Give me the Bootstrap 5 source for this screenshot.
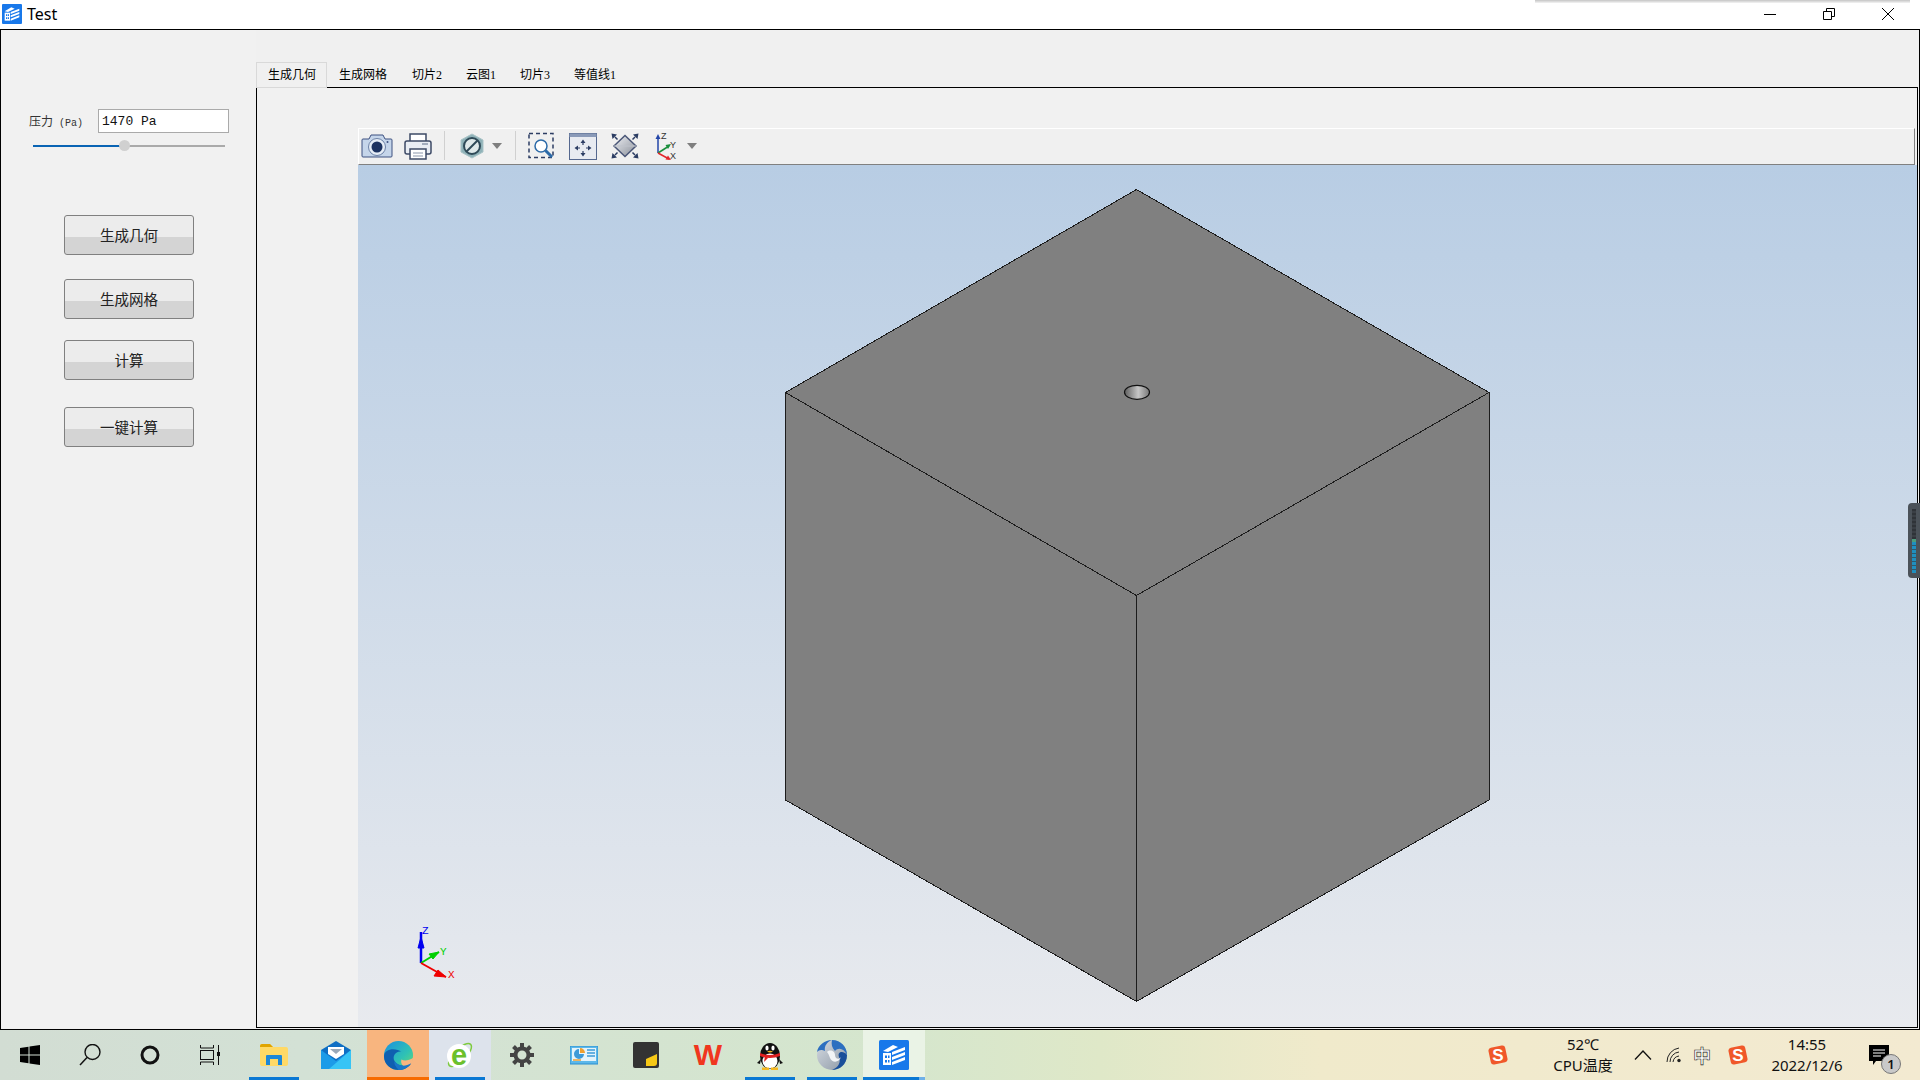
<!DOCTYPE html>
<html lang="zh-CN">
<head>
  <meta charset="UTF-8">
  <title>Test</title>
  <link href="https://cdn.jsdelivr.net/npm/bootstrap@5.3.0/dist/css/bootstrap.min.css" rel="stylesheet">
  <style>
    html, body { height: 100%; }
    body {
      background-color: #f0f0f0;
      overflow: hidden;
      font-family: "Noto Sans", "Noto Sans CJK SC", sans-serif;
      color: #000;
    }
    .app-shell { height: 1080px; position: relative; }

    /* title bar */
    .title-bar { height: 29px; background-color: #fff; padding: 0 0 2px 2px; }
    .title-text { font-size: 16px; margin-left: 5px; line-height: 1; }
    .win-ctl { width: 59px; height: 27px; }
    .win-ctls { padding-right: 3px; }
    .top-shadow {
      position: absolute; left: 1535px; top: 0; width: 375px; height: 3px;
      background: linear-gradient(#c4c4c4, #f4f4f4);
    }

    /* main window */
    .main-win {
      height: 1001px;
      border: 1px solid #000;
      background-color: #f0f0f0;
      padding-right: 1px;
      padding-bottom: 1px;
    }
    .side-panel {
      width: 255px;
      flex: 0 0 255px;
      padding-top: 79px;
      background-color: #f1f1f1;
      font-family: "Noto Sans CJK SC", sans-serif;
    }
    .press-row { padding-left: 28px; height: 24px; }
    .press-label { width: 69px; font-size: 12px; color: #333; white-space: nowrap; }
    .press-unit { font-family: "Liberation Mono", monospace; font-size: 10px; margin-left: 6px; }
    .press-input {
      width: 131px; height: 24px;
      border: 1px solid #aaa;
      border-radius: 0;
      padding: 1px 3px 0;
      font-family: "Liberation Mono", monospace;
      font-size: 13px;
      color: #111;
      background-color: #fff;
    }
    .press-range {
      display: block;
      width: 192px; height: 11px;
      margin: 7px 0 0 32px;
      padding: 0;
    }
    .press-range::-webkit-slider-runnable-track {
      height: 2px; background: transparent;
    }
    .press-range::-webkit-slider-thumb {
      width: 11px; height: 11px; margin-top: -4.5px;
      background-color: #d0d0d0;
      border: 0; border-radius: 50%;
      box-shadow: none;
    }
    .act-btns { padding: 64px 0 0 63px; }
    .act-btn {
      display: block;
      width: 130px; height: 40px;
      padding: 0 0 1px;
      font-size: 14.5px;
      line-height: 37px;
      color: #222;
      border: 1px solid #808080;
      border-radius: 3px;
      background: linear-gradient(#ececec 0, #ececec 21px, #d4d4d4 21px, #d4d4d4 100%);
    }
    .act-btn-2 { margin-top: 24px; }
    .act-btn-3 { margin-top: 21px; }
    .act-btn-4 { margin-top: 27px; }

    /* tabs */
    .work-col { padding-top: 32px; min-width: 0; }
    .view-tabs {
      border-bottom: 1px solid #000;
      font-family: "Liberation Serif", "Noto Sans CJK SC", serif;
      font-size: 12px;
      height: 26px;
    }
    .view-tabs .nav-link {
      height: 25px;
      margin: 0;
      padding: 0 12px;
      line-height: 26px;
      color: #000;
      border: 0;
      border-radius: 0;
      background: transparent;
      white-space: nowrap;
    }
    .view-tabs .nav-link.active {
      height: 26px;
      width: 71px;
      padding: 0 11px;
      margin-bottom: 0;
      line-height: 24px;
      border: 1px solid #d9d9d9;
      background-color: #f0f0f0;
      color: #000;
    }
    .view-tabs .nav-item:nth-child(2) { margin-right: 1px; }
    .view-pane {
      border: solid #000;
      border-width: 0 1px 1px 1px;
      padding: 40px 0 0 101px;
      min-height: 0;
      background-color: #f1f1f1;
    }

    /* viewer */
    .tool-strip {
      height: 37px;
      flex: 0 0 37px;
      margin-right: 2px;
      background-color: #f0f0f0;
      border-top: 1px solid #fff;
      border-left: 1px solid #fff;
      border-right: 1px solid #808080;
      border-bottom: 1px solid #808080;
      padding: 0 0 2px 1px;
    }
    .tool-strip svg { flex: 0 0 auto; display: block; }
    .tb-sep { width: 1px; height: 29px; background-color: #d0d0d0; }
    .ml-7 { margin-left: 7px; }
    .ml-9 { margin-left: 9px; }
    .ml-10 { margin-left: 10px; }
    .ml-2px { margin-left: 2px; }
    .ml-12 { margin-left: 12px; }
    .ml-8 { margin-left: 8px; }
    .ml-3px { margin-left: 3px; }
    .gl-canvas {
      position: relative;
      background: linear-gradient(#b8cde4, #e8eaee);
      min-height: 0;
    }
    .cube-svg { position: absolute; left: 0; top: 0; }
    .side-handle {
      position: absolute; left: 1908px; top: 503px; width: 12px; height: 75px;
      background-color: #4b5259;
      border-radius: 4px 0 0 4px;
    }
    .handle-meter {
      position: absolute; left: 4px; top: 6px; width: 4px; height: 64px;
      background: repeating-linear-gradient(#2f3338 0, #2f3338 2px, #3a3f45 2px, #3a3f45 4px);
    }
    .handle-level {
      position: absolute; left: 0; bottom: 0; width: 100%; height: 34px;
      border-top: 3px solid #4b9c7c;
      background: repeating-linear-gradient(#1f8fc0 0, #1f8fc0 3px, #2b5a70 3px, #2b5a70 4px);
    }

    /* taskbar */
    .task-bar {
      height: 50px;
      background: linear-gradient(90deg, #d2ddd3 0, #d3e1d5 300px, #d5e6cd 900px, #dfe8c8 1100px, #f0eacb 1320px, #f3ead1 100%);
      font-family: "Noto Sans", "Noto Sans CJK SC", sans-serif;
      color: #111;
    }
    .sys-slot { width: 60px; height: 50px; }
    .task-slot { width: 62px; height: 50px; position: relative; flex: 0 0 62px; }
    .task-apps { margin-left: 3px; }
    .task-slot.is-open::after {
      content: ""; position: absolute; left: 6px; right: 6px; bottom: 0; height: 3px;
      background-color: #0a78d4;
    }
    .task-slot.is-edge { background-color: #f8b57f; }
    .task-slot.is-edge::after {
      content: ""; position: absolute; left: 0; right: 0; bottom: 0; height: 3px;
      background-color: #f76b00;
    }
    .task-slot.is-ie { background-color: #dde3ec; }
    .task-slot.is-cur { background-color: #eaf3e6; }
    .task-slot.is-cur::after {
      content: ""; position: absolute; left: 0; right: 0; bottom: 0; height: 3px;
      background: linear-gradient(90deg, #0a78d4 0, #0a78d4 90%, #6fb0e8 90%);
    }
    .tray-wrap { height: 50px; }
    .tray-two {
      font-size: 15px;
      line-height: 21px;
      text-align: center;
      white-space: nowrap;
    }
    .tray-s { margin-right: 40px; }
    .tray-cpu { width: 70px; margin-right: 16px; }
    .tray-chev { margin-right: 14px; }
    .tray-wifi { margin-right: 10px; }
    .tray-time { width: 84px; margin-left: 17px; }
    .tray-zh {
      width: 20px;
      font-family: "Noto Sans CJK SC", sans-serif;
      font-size: 18px;
      font-weight: 700;
      color: #fff;
      -webkit-text-stroke: .6px #222;
      line-height: 1;
      text-align: center;
      margin-right: 16px;
    }
    .note-wrap { position: relative; width: 40px; height: 50px; margin-left: 19px; margin-right: 12px; }
    .note-badge {
      position: absolute; left: 13px; top: 24px;
      width: 20px; height: 20px;
      border-radius: 50%;
      border: 1px solid #777;
      background-color: #c9c9c9;
      font-size: 13px; font-weight: 600;
      line-height: 18px;
      text-align: center;
      color: #111;
    }
  </style>
</head>
<body>
  <svg width="0" height="0" class="position-absolute">
    <symbol id="appIcon" viewBox="0 0 30 30">
      <rect width="30" height="30" rx="1.5" fill="#1878ea"/>
      <path d="M4 11 L14 5 L19 7 L9 12 Z" fill="#fff"/>
      <path d="M4 13 H12 V25 H4 Z" fill="#fff"/>
      <path d="M6 15.5 H8 V18 H6 Z M9 15.5 H10.5 V18 H9 Z M6 20 H8 V22.5 H6 Z M9 20 H10.5 V22.5 H9 Z" fill="#1878ea"/>
      <path d="M13 12 L26 7 V10 L13 15 Z M13 17 L26 12 V15 L13 20 Z M13 22 L26 17 V20 L13 25 Z" fill="#fff"/>
    </symbol>
    <linearGradient id="edgeTop" x1="0" y1="0" x2="1" y2="1">
      <stop offset="0" stop-color="#1b8fe0"/><stop offset="0.6" stop-color="#2fc2b4"/><stop offset="1" stop-color="#6fdc6a"/>
    </linearGradient>
    <linearGradient id="holeGrad" x1="0" y1="0" x2="1" y2="0">
      <stop offset="0" stop-color="#5f5f5f"/><stop offset="0.55" stop-color="#c6c6c6"/><stop offset="1" stop-color="#777"/>
    </linearGradient>
    <linearGradient id="diaGrad" x1="0" y1="0" x2="1" y2="1">
      <stop offset="0" stop-color="#eef0f4"/><stop offset="1" stop-color="#8a8f99"/>
    </linearGradient>
    <linearGradient id="swirlGrad" x1="0" y1="0" x2="1" y2="1">
      <stop offset="0" stop-color="#d5dbe2"/><stop offset="1" stop-color="#8d98a5"/>
    </linearGradient>
  </svg>

  <div class="app-shell d-flex flex-column">
    <div class="title-bar d-flex align-items-center justify-content-between">
      <div class="d-flex align-items-center">
        <svg width="20" height="20"><use href="#appIcon"/></svg>
        <span class="title-text">Test</span>
      </div>
      <div class="win-ctls d-flex">
        <div class="win-ctl d-flex align-items-center justify-content-center">
          <svg width="12" height="12"><path d="M0 6.5H12" stroke="#000" stroke-width="1"/></svg>
        </div>
        <div class="win-ctl d-flex align-items-center justify-content-center">
          <svg width="12" height="12"><path d="M.5 3.5H8.5V11.5H.5Z M3.5 3.5V.5H11.5V8.5H8.5" fill="none" stroke="#000"/></svg>
        </div>
        <div class="win-ctl d-flex align-items-center justify-content-center">
          <svg width="12" height="12"><path d="M0 0L12 12M12 0L0 12" stroke="#000" stroke-width="1"/></svg>
        </div>
      </div>
    </div>
    <div class="top-shadow"></div>

    <div class="main-win d-flex">
      <aside class="side-panel">
        <div class="press-row d-flex align-items-center">
          <label class="press-label" for="pressInput">压力<span class="press-unit">(Pa)</span></label>
          <input id="pressInput" class="press-input" type="text" value="1470 Pa">
        </div>
        <input class="form-range press-range" type="range" min="0" max="3100" value="1470" style="background: linear-gradient(#0a64b4, #0a64b4) 0 50% / 47.4% 2px no-repeat, linear-gradient(#aaa, #aaa) 0 50% / 100% 2px no-repeat;">
        <div class="act-btns">
          <button class="btn act-btn" type="button">生成几何</button>
          <button class="btn act-btn act-btn-2" type="button">生成网格</button>
          <button class="btn act-btn act-btn-3" type="button">计算</button>
          <button class="btn act-btn act-btn-4" type="button">一键计算</button>
        </div>
      </aside>

      <div class="work-col flex-grow-1 d-flex flex-column">
        <ul class="nav nav-tabs view-tabs flex-nowrap">
          <li class="nav-item"><a class="nav-link active" href="#">生成几何</a></li>
          <li class="nav-item"><a class="nav-link" href="#">生成网格</a></li>
          <li class="nav-item"><a class="nav-link" href="#">切片2</a></li>
          <li class="nav-item"><a class="nav-link" href="#">云图1</a></li>
          <li class="nav-item"><a class="nav-link" href="#">切片3</a></li>
          <li class="nav-item"><a class="nav-link" href="#">等值线1</a></li>
        </ul>
        <div class="view-pane flex-grow-1 d-flex flex-column">
          <div class="tool-strip d-flex align-items-center">
            <!-- camera -->
            <svg width="34" height="30" viewBox="0 0 34 30">
              <path d="M3 8H9L11 4H23L25 8H31Q32 8 32 9V25Q32 26 31 26H3Q2 26 2 25V9Q2 8 3 8Z" fill="#c5d5ea" stroke="#3d5080" stroke-width="1"/>
              <circle cx="17" cy="16" r="8.5" fill="#e6edf6" stroke="#6c81a6"/>
              <circle cx="17" cy="16" r="5.5" fill="#1d3361"/>
              <circle cx="27.500" cy="11" r="1" fill="#3d5080"/>
            </svg>
            <!-- printer -->
            <svg class="ml-7" width="34" height="30" viewBox="0 0 34 30">
              <path d="M9 10V3H25V10" fill="#fff" stroke="#3d4a66" stroke-width="1.5"/>
              <rect x="4" y="10" width="26" height="13" rx="2" fill="#e9edf3" stroke="#3d4a66" stroke-width="1.5"/>
              <path d="M21 13H27" stroke="#8b97ab" stroke-width="1.500"/>
              <rect x="9" y="18" width="16" height="10" fill="#fff" stroke="#3d4a66" stroke-width="1.5"/>
              <path d="M12 22H22M12 25H22" stroke="#8b97ab"/>
            </svg>
            <div class="tb-sep ml-9"></div>
            <!-- visibility -->
            <svg class="ml-10" width="34" height="30" viewBox="0 0 34 30">
              <path d="M17 3L28 9V21L17 27L6 21V9Z" fill="#8fb2b8" stroke="#a9c3c7"/>
              <circle cx="17" cy="15" r="8" fill="#dfe9ea" stroke="#2f4a58" stroke-width="2"/>
              <path d="M11.500 20.500L22.500 9.500" stroke="#2f4a58" stroke-width="2"/>
            </svg>
            <svg class="ml-2px" width="12" height="30" viewBox="0 0 12 30"><path d="M1 12H11L6 18Z" fill="#7f7f7f"/></svg>
            <div class="tb-sep ml-12"></div>
            <!-- zoom box -->
            <svg class="ml-9" width="34" height="30" viewBox="0 0 34 30">
              <rect x="4" y="2.500" width="24" height="24" fill="none" stroke="#2c3d63" stroke-width="1.5" stroke-dasharray="4 3"/>
              <circle cx="16" cy="15" r="6" fill="#fff" stroke="#2c6aa8" stroke-width="1.5"/>
              <path d="M20.500 19.500L27 26" stroke="#2c6aa8" stroke-width="3"/>
            </svg>
            <!-- fit -->
            <svg class="ml-7" width="34" height="30" viewBox="0 0 34 30">
              <rect x="3.500" y="2.500" width="27" height="26" fill="#e8ebf1" stroke="#55688f"/>
              <rect x="3.500" y="2.500" width="27" height="3.500" fill="#8a9ab8"/>
              <path d="M17 11.500V14M17 20V22.500M11.500 17H14M20 17H22.500" stroke="#2c3d63" stroke-width="1.200"/>
              <path d="M17 8.500L14.500 12H19.500Z M17 25.500L14.500 22H19.500Z M8.500 17L12 14.500V19.500Z M25.500 17L22 14.500V19.500Z" fill="#2c3d63"/>
            </svg>
            <!-- diamond -->
            <svg class="ml-8" width="34" height="30" viewBox="0 0 34 30">
              <path d="M17 4.500L28 15L17 25.500L6 15Z" fill="url(#diaGrad)" stroke="#4a5677" stroke-width="1.500"/>
              <path d="M6 15H28" stroke="#bfc3cb"/>
              <path d="M7 6L9.500 8.500M27 6L24.500 8.500M7 24L9.500 21.500M27 24L24.500 21.500" stroke="#2c3d63" stroke-width="1.500"/>
              <path d="M3.500 2.500L9 3.500L4.500 8Z M30.500 2.500L25 3.500L29.500 8Z M3.500 27.500L9 26.500L4.500 22Z M30.500 27.500L25 26.500L29.500 22Z" fill="#2c3d63"/>
            </svg>
            <!-- axes -->
            <svg class="ml-7" width="34" height="30" viewBox="0 0 34 30">
              <path d="M9 22V6" stroke="#2346a8" stroke-width="1.5"/>
              <path d="M9 3L6.500 8H11.500Z" fill="#2346a8"/>
              <path d="M9 22L20 15" stroke="#1a8f3c" stroke-width="1.5"/>
              <path d="M22 13L16.500 14L19 18Z" fill="#1a8f3c"/>
              <path d="M9 22L20 28" stroke="#e3262b" stroke-width="1.5"/>
              <path d="M22 29L16.500 28.500L19 24.500Z" fill="#e3262b"/>
              <text x="12" y="8" font-size="9" font-family="Liberation Sans, sans-serif" fill="#333">Z</text>
              <text x="21" y="17" font-size="9" font-family="Liberation Sans, sans-serif" fill="#333">Y</text>
              <text x="21" y="28" font-size="9" font-family="Liberation Sans, sans-serif" fill="#333">X</text>
            </svg>
            <svg class="ml-3px" width="12" height="30" viewBox="0 0 12 30"><path d="M1 12H11L6 18Z" fill="#7f7f7f"/></svg>
          </div>
          <div class="gl-canvas flex-grow-1">
            <svg class="cube-svg" width="1559" height="862" viewBox="0 0 1559 862">
              <g fill="#808080" stroke="#1c1c1c" stroke-width="1" stroke-linejoin="round" shape-rendering="crispEdges">
                <polygon points="778.5,24.5 1131,227.5 778.5,430.500 427.5,227.5"/>
                <polygon points="427.5,227.5 778.5,430.500 778.500,836.500 427.5,635"/>
                <polygon points="1131,227.5 778.5,430.500 778.500,836.500 1131,635"/>
              </g>
              <ellipse cx="779" cy="227.300" rx="12.500" ry="7" fill="url(#holeGrad)" stroke="#111" stroke-width="1.200"/>
              <!-- orientation triad -->
              <g stroke-width="2.500">
                <path d="M63 798V767" stroke="#0000f0"/>
                <path d="M63 772L60 783H66Z" fill="#0000f0" stroke="#0000f0" stroke-width="1"/>
                <path d="M63 798L81 787" stroke="#00d000" stroke-width="2"/>
                <path d="M81 787L71 789L75 794Z" fill="#00d000" stroke="#00d000" stroke-width="1"/>
                <path d="M63 798L88 812" stroke="#f00000" stroke-width="2"/>
                <path d="M88 812L76 811L80 805Z" fill="#f00000" stroke="#f00000" stroke-width="1"/>
              </g>
              <g font-family="Liberation Mono, monospace" font-size="11">
                <text x="64" y="769" fill="#0000f0">Z</text>
                <text x="82" y="790" fill="#00d000">Y</text>
                <text x="90" y="813" fill="#f00000">X</text>
              </g>
            </svg>
          </div>
        </div>
      </div>
    </div>

    <div class="side-handle"><div class="handle-meter"><div class="handle-level"></div></div></div>

    <div class="task-bar d-flex align-items-center">
      <div class="sys-slot d-flex align-items-center justify-content-center">
        <svg width="20" height="20" viewBox="0 0 20 20"><path d="M0 3L8.500 1.800V9.500H0Z M9.500 1.600L20 0V9.500H9.500Z M0 10.500H8.500V18.200L0 17Z M9.500 10.500H20V20L9.500 18.400Z" fill="#000"/></svg>
      </div>
      <div class="sys-slot d-flex align-items-center justify-content-center">
        <svg width="22" height="22" viewBox="0 0 22 22"><circle cx="13.500" cy="8" r="7.500" fill="none" stroke="#111" stroke-width="1.400"/><path d="M8 13.500L1 21" stroke="#111" stroke-width="1.500"/></svg>
      </div>
      <div class="sys-slot d-flex align-items-center justify-content-center">
        <svg width="20" height="20" viewBox="0 0 20 20"><circle cx="10" cy="10" r="8" fill="none" stroke="#111" stroke-width="3"/></svg>
      </div>
      <div class="sys-slot d-flex align-items-center justify-content-center">
        <svg width="20" height="20" viewBox="0 0 20 20"><path d="M.5 0V3H13.500V0M.5 20V17H13.500V20" fill="none" stroke="#111"/><rect x=".5" y="5.500" width="13" height="9" fill="none" stroke="#111"/><path d="M18.500 0V20" stroke="#111"/><rect x="17" y="7" width="3" height="4" fill="#111"/></svg>
      </div>

      <div class="task-apps d-flex">
        <div class="task-slot is-open d-flex align-items-center justify-content-center">
          <svg width="28" height="24" viewBox="0 0 28 24"><path d="M0 3Q0 1 2 1H10L13 4H26Q28 4 28 6V21Q28 23 26 23H2Q0 23 0 21Z" fill="#ffd966"/><path d="M0 3Q0 1 2 1H10L13 4H0Z" fill="#e0a400"/><path d="M6 22V13Q6 12 7 12H21Q22 12 22 13V22H18V16H10V22Z" fill="#1e88d8"/></svg>
        </div>
        <div class="task-slot d-flex align-items-center justify-content-center">
          <svg width="30" height="28" viewBox="0 0 30 28"><path d="M0 9L15 0L30 9V28H0Z" fill="#0f6fc4"/><path d="M7 6H23V13L15 18L7 13Z" fill="#fff"/><path d="M9 8H21L15 13Z" fill="#9aa8b8"/><path d="M0 9L15 20L30 9V28H0Z" fill="#1c9be8"/><path d="M30 9V28H8Z" fill="#37c4f5"/></svg>
        </div>
        <div class="task-slot is-edge d-flex align-items-center justify-content-center">
          <svg width="31" height="31" viewBox="0 0 32 32">
            <circle cx="16" cy="16" r="15" fill="url(#edgeTop)"/>
            <path d="M1 17C1 26 9 31 16 31C22 31 27 28 29 24C23 28 15 27 12 22C9 17 13 11 19 12C14 8 1 8 1 17Z" fill="#0f5fb0"/>
            <path d="M19 20C22 22 27 21 31 18.500C31 24 27 27 23 27C20 27 18 24 19 20Z" fill="#f8b57f"/>
            <path d="M12 22C15 27 23 28 29 24C26 29 20 31 16 31C13 27 11 25 12 22Z" fill="#1877c9"/>
          </svg>
        </div>
        <div class="task-slot is-open is-ie d-flex align-items-center justify-content-center">
          <svg width="30" height="34" viewBox="0 0 30 34">
            <ellipse cx="15" cy="17" rx="15" ry="6" transform="rotate(-45 15 17)" fill="none" stroke="#7ecb3f" stroke-width="1.500"/>
            <circle cx="14" cy="18" r="12" fill="#fff"/>
            <text x="14" y="27" text-anchor="middle" font-family="Liberation Sans, sans-serif" font-weight="700" font-size="29" fill="#6cc02c">e</text>
          </svg>
        </div>
        <div class="task-slot d-flex align-items-center justify-content-center">
          <svg width="24" height="24" viewBox="0 0 24 24">
            <circle cx="12" cy="12" r="6.500" fill="none" stroke="#444" stroke-width="4"/>
            <path d="M12 0V5M12 19V24M0 12H5M19 12H24M3.500 3.500L7 7M17 17L20.500 20.500M20.500 3.500L17 7M7 17L3.500 20.500" stroke="#444" stroke-width="4"/>
          </svg>
        </div>
        <div class="task-slot d-flex align-items-center justify-content-center">
          <svg width="28" height="19" viewBox="0 0 28 19">
            <rect width="28" height="18" fill="#5cb8ea" stroke="#2a8fd0"/>
            <rect x="2" y="2" width="24" height="13" fill="#e4f3fb"/>
            <path d="M9 3A5 5 0 1 0 14 8H9Z" fill="#3d9ad8"/>
            <path d="M10 2A5 5 0 0 1 15 7H10Z" fill="#f0a030"/>
            <path d="M17 4H25M17 7H25M17 10H25" stroke="#3d9ad8" stroke-width="1.500"/>
            <path d="M3 14H11" stroke="#f0a030" stroke-width="1.500"/>
          </svg>
        </div>
        <div class="task-slot d-flex align-items-center justify-content-center">
          <svg width="26" height="26" viewBox="0 0 26 26"><rect width="26" height="26" rx="2" fill="#333"/><path d="M13 24V17L24 12V21Q24 24 21 24Z" fill="#f7c916"/></svg>
        </div>
        <div class="task-slot d-flex align-items-center justify-content-center">
          <svg width="32" height="40" viewBox="0 0 32 40"><text x="16" y="30" text-anchor="middle" font-family="Liberation Sans, sans-serif" font-weight="700" font-size="30" fill="#f0361e">W</text></svg>
        </div>
        <div class="task-slot is-open d-flex align-items-center justify-content-center">
          <svg width="26" height="30" viewBox="0 0 26 30">
            <ellipse cx="13" cy="16" rx="10" ry="13" fill="#111"/>
            <path d="M4 19L0 23L3 24ZM22 19L26 23L23 24Z" fill="#111"/>
            <ellipse cx="13" cy="21" rx="7.500" ry="7.500" fill="#fff"/>
            <path d="M3 13Q13 17 23 13V16Q13 20 3 16Z" fill="#e02020"/>
            <path d="M8 16L7 22L11 18Z" fill="#e02020"/>
            <ellipse cx="10" cy="8" rx="1.600" ry="2.500" fill="#fff"/><ellipse cx="16" cy="8" rx="1.600" ry="2.500" fill="#fff"/>
            <path d="M10 11.500Q13 10 16 11.500Q13 13.500 10 11.500Z" fill="#f5b820"/>
            <path d="M5 27.500H12V30H5ZM14 27.500H21V30H14Z" fill="#f5b820"/>
          </svg>
        </div>
        <div class="task-slot is-open d-flex align-items-center justify-content-center">
          <svg width="30" height="30" viewBox="0 0 30 30">
            <circle cx="15" cy="15" r="15" fill="url(#swirlGrad)"/>
            <path d="M0 12C1 5 8 0 15 0C10 2 7 6 8 11C4 9 2 10 0 12Z" fill="#2c6fc0"/>
            <path d="M30 15C30 25 22 30 15 30C22 27 24 22 22 17C20 12 26 10 30 15Z" fill="#1a4f9a"/>
            <path d="M15 0C24 0 30 7 30 15C27 8 21 7 18 11C15 8 14 4 15 0Z" fill="#2c6fc0"/>
            <path d="M10 12C13 9 18 11 18 15C18 19 22 20 24 17C22 23 15 23 13 18C12 15 11 13 10 12Z" fill="#f2f4f6"/>
          </svg>
        </div>
        <div class="task-slot is-cur d-flex align-items-center justify-content-center">
          <svg width="30" height="30"><use href="#appIcon"/></svg>
        </div>
      </div>

      <div class="tray-wrap d-flex align-items-center ms-auto">
        <svg class="tray-s" width="20" height="20" viewBox="0 0 20 20">
          <rect x="1.500" y="1.500" width="17" height="17" rx="3" transform="rotate(-12 10 10)" fill="#f0582a"/>
          <text x="10" y="16" text-anchor="middle" font-family="Liberation Sans, sans-serif" font-weight="700" font-size="17" fill="#fff">S</text>
        </svg>
        <div class="tray-two tray-cpu"><div>52℃</div><div>CPU温度</div></div>
        <svg class="tray-chev" width="18" height="10" viewBox="0 0 18 10"><path d="M1 9.500L9 1L17 9.500" fill="none" stroke="#111" stroke-width="1.300"/></svg>
        <svg class="tray-wifi" width="16" height="16" viewBox="0 0 16 16"><path d="M1 15A14 14 0 0 1 13 1M4 15A10 10 0 0 1 13 5M7 15A7 7 0 0 1 13 9" fill="none" stroke="#222" stroke-width="1"/><circle cx="13" cy="13.500" r="1.700" fill="#222"/></svg>
        <div class="tray-zh">中</div>
        <svg width="20" height="20" viewBox="0 0 20 20">
          <rect x="1.500" y="1.500" width="17" height="17" rx="3" transform="rotate(-12 10 10)" fill="#f0582a"/>
          <text x="10" y="16" text-anchor="middle" font-family="Liberation Sans, sans-serif" font-weight="700" font-size="17" fill="#fff">S</text>
        </svg>
        <div class="tray-two tray-time"><div>14:55</div><div>2022/12/6</div></div>
        <div class="note-wrap">
          <svg class="position-absolute top-0 start-0" width="22" height="40" viewBox="0 0 22 40">
            <path d="M1 15H21V31H8L5 35V31H1Z" fill="#000"/>
            <path d="M5 20H17M5 23H17M5 26H13" stroke="#fff"/>
          </svg>
          <div class="note-badge">1</div>
        </div>
      </div>
    </div>
  </div>
</body>
</html>
